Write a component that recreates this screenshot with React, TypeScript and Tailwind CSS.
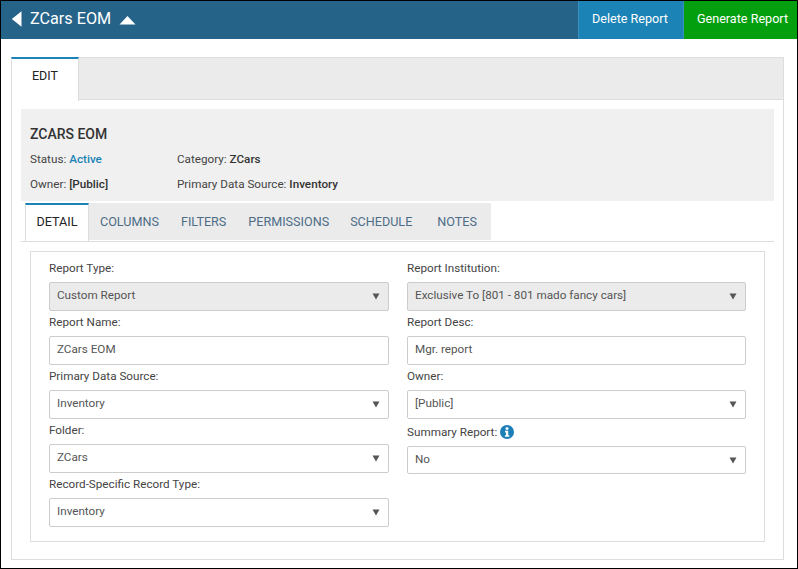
import type { ReactNode } from "react";

const subTabs = [
  { name: "COLUMNS", cls: "pl-[11px] pr-[11px]" },
  { name: "FILTERS", cls: "pl-[11px] pr-[11px]" },
  { name: "PERMISSIONS", cls: "pl-[11px] pr-[10px]" },
  { name: "SCHEDULE", cls: "pl-[11px] pr-[12px]" },
  { name: "NOTES", cls: "pl-[13px] pr-[14px]" },
];

function Caret() {
  return (
    <svg width="8" height="8" viewBox="0 0 8 8" className="shrink-0">
      <path d="M0.5 1.5h7L4 7.5z" fill="#555" />
    </svg>
  );
}

function Field({
  label,
  value,
  disabled,
  text,
  h = "h-[29px]",
}: {
  label: ReactNode;
  value: string;
  disabled?: boolean;
  text?: boolean;
  h?: string;
}) {
  return (
    <div className="flex flex-col">
      <div className="flex h-[25px] items-center pb-px text-[11.7px] text-[#444]">{label}</div>
      <div
        className={`flex ${h} items-center justify-between rounded-[2px] border border-[#ccc] pb-px pl-[7px] pr-[8px] text-[11.7px] text-[#555] ${
          disabled ? "bg-[#ebebeb]" : "bg-white"
        }`}
      >
        <span>{value}</span>
        {!text && <Caret />}
      </div>
    </div>
  );
}

export default function App() {
  return (
    <div className="h-[569px] w-[798px] overflow-hidden bg-black p-px font-['Roboto',sans-serif]">
      <div className="flex h-[567px] w-[796px] flex-col bg-white">
        <header className="flex h-[38px] shrink-0 items-center bg-[#266389] text-white">
          <svg width="12" height="16" viewBox="0 0 12 16" className="ml-[10px] -mt-[3px]">
            <path d="M10.5 0.2v15.6L0.8 8z" fill="#fff" />
          </svg>
          <h1 className="ml-[7px] -mt-[2px] text-[16.2px] leading-none">ZCars EOM</h1>
          <svg width="17" height="10" viewBox="0 0 17 10" className="ml-[8px]">
            <path d="M8.5 1L16.5 9.5H0.5z" fill="#fff" />
          </svg>
          <div className="ml-auto flex h-full text-[12.6px]">
            <button className="h-full w-[106px] border-x border-[#3d8fbd] bg-[#1c83b6] pb-[2px] pr-[2px]">Delete Report</button>
            <button className="h-full w-[113px] bg-[#039f0e] pb-[2px] pl-[4px]">Generate Report</button>
          </div>
        </header>

        <div className="px-[10px] pt-[18px]">
          <div className="w-[773px]">
            <div className="flex h-[43px] border-b border-t border-[#ddd] bg-[#ebebeb]">
              <div className="-mb-px -mt-px flex h-[44px] w-[68px] justify-center border-x border-t-2 border-x-[#ddd] border-t-[#1c83b6] bg-white pt-[9px] text-[12.5px] leading-4 text-[#222]">
                EDIT
              </div>
              <div className="flex-1 border-r border-[#ddd]" />
            </div>

            <div className="h-[460px] border-x border-b border-[#ddd] pl-[9px] pr-[9px] pt-[9px]">
              <section className="h-[92px] bg-[#f0f0f0] pl-[9px] pt-[17px] text-[11.7px] text-[#444]">
                <h2 className="text-[14px] font-medium leading-4 text-[#333]">ZCARS EOM</h2>
                <div className="mt-[9px] grid grid-cols-[147px_1fr] gap-y-[8px] leading-[17px]">
                  <div>
                    Status: <span className="font-medium text-[#1c83b6]">Active</span>
                  </div>
                  <div>
                    Category: <span className="font-medium text-[#333]">ZCars</span>
                  </div>
                  <div>
                    Owner: <span className="font-medium text-[#333]">[Public]</span>
                  </div>
                  <div>
                    Primary Data Source: <span className="font-medium text-[#333]">Inventory</span>
                  </div>
                </div>
              </section>

              <nav className="mt-[2px] flex h-[39px] border-b border-[#ddd] pl-[4px]">
                <div className="flex h-[37px] bg-[#ebebeb]">
                  <div className="flex h-[38px] w-[64px] justify-center border-l border-r border-t-2 border-x-[#ddd] border-t-[#1c83b6] bg-white pt-[9px] text-[12.6px] leading-4 text-[#222]">
                    DETAIL
                  </div>
                  {subTabs.map((t) => (
                    <div key={t.name} className={`pt-[11px] text-[12.6px] leading-4 text-[#4d6d87] ${t.cls}`}>
                      {t.name}
                    </div>
                  ))}
                </div>
              </nav>

              <div className="ml-[9px] mt-[9px] h-[291px] w-[735px] border border-[#ddd] pl-[18px] pr-[18px] pt-[5px]">
                <div className="grid grid-cols-[340px_339px] gap-x-[18px]">
                  <div className="flex flex-col">
                    <Field label="Report Type:" value="Custom Report" disabled />
                    <Field label="Report Name:" value="ZCars EOM" text />
                    <Field label="Primary Data Source:" value="Inventory" />
                    <Field label="Folder:" value="ZCars" />
                    <Field label="Record-Specific Record Type:" value="Inventory" />
                  </div>
                  <div className="flex flex-col">
                    <Field label="Report Institution:" value="Exclusive To [801 - 801 mado fancy cars]" disabled />
                    <Field label="Report Desc:" value="Mgr. report" text />
                    <Field label="Owner:" value="[Public]" />
                    <div className="pt-[2px]">
                      <Field
                        h="h-[28px]"
                        label={
                          <span className="flex items-center gap-[3px]">
                            Summary Report:
                            <svg width="14" height="14" viewBox="0 0 14 14" className="-mt-[2px]">
                              <circle cx="7" cy="7" r="7" fill="#1c7fb8" />
                              <circle cx="7" cy="3.4" r="1.5" fill="#fff" />
                              <path d="M5 5.8h3.2v4.4H9.3v1.6H4.9v-1.6H6V7.4H5z" fill="#fff" />
                            </svg>
                          </span>
                        }
                        value="No"
                      />
                    </div>
                  </div>
                </div>
              </div>
            </div>
          </div>
        </div>
      </div>
    </div>
  );
}
